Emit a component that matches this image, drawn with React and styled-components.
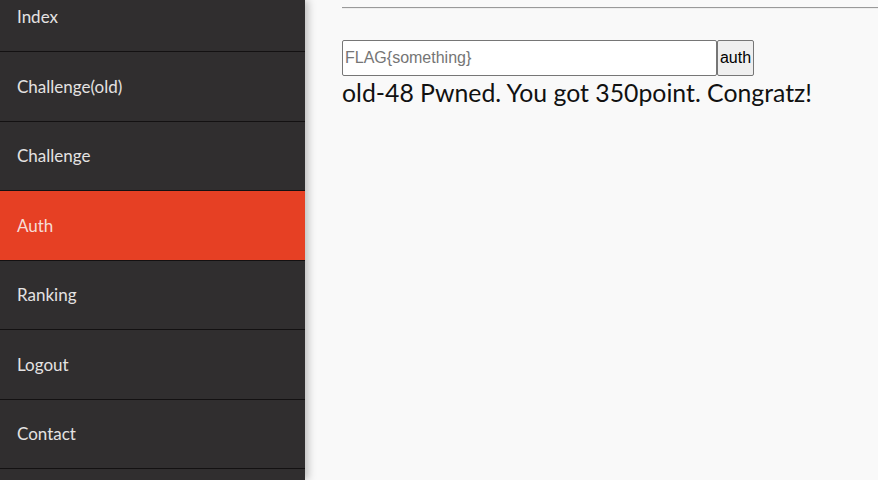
import React from "react";
import styled, { createGlobalStyle } from "styled-components";

const GlobalStyle = createGlobalStyle`
  html, body {
    margin: 0;
    padding: 0;
    height: 100%;
    overflow: hidden;
    background: #f9f9f9;
  }
  #root {
    height: 100%;
  }
`;

const Page = styled.div`
  display: flex;
  height: 480px;
  font-family: Lato, "Open Sans", sans-serif;
`;

const Sidebar = styled.nav`
  width: 305px;
  flex-shrink: 0;
  background: #302e2f;
  box-shadow: 3px 0 8px rgba(0, 0, 0, 0.25);
  overflow: hidden;
  position: relative;
  z-index: 1;
`;

const Menu = styled.ul`
  list-style: none;
  margin: -17.5px 0 0;
  padding: 0;
`;

const MenuItem = styled.li`
  height: 68.5px;
  display: flex;
  align-items: center;
  padding-left: 17px;
  border-bottom: 1px solid #131112;
  background: ${(p) => (p.$active ? "#e64024" : "transparent")};
  color: ${(p) => (p.$active ? "#f6ddd6" : "#e4e2e2")};
  font-size: 17px;
`;

const Main = styled.main`
  flex: 1;
  padding: 0 0 0 37px;
  background: #f9f9f9;
`;

const Rule = styled.hr`
  margin: 7px 0 0;
  border: none;
  border-top: 1px solid #9a9a9a;
  border-bottom: 1px solid #eeeeee;
  height: 0;
`;

const AuthForm = styled.form`
  display: flex;
  margin-top: 31px;
`;

const FlagInput = styled.input`
  width: 375px;
  height: 36px;
  box-sizing: border-box;
  border: 1px solid #767676;
  border-radius: 2px;
  padding: 0 2px;
  font-family: Arial, "Liberation Sans", sans-serif;
  font-size: 16px;
  color: #000;
  background: #fff;
  &::placeholder {
    color: #757575;
  }
`;

const AuthButton = styled.button`
  height: 36px;
  width: 37px;
  box-sizing: border-box;
  border: 1px solid #767676;
  border-radius: 2px;
  background: #efefef;
  font-family: Arial, "Liberation Sans", sans-serif;
  font-size: 16px;
  color: #000;
  padding: 0;
`;

const Message = styled.div`
  font-size: 24.8px;
  color: #111;
  margin-top: 1px;
  line-height: 31px;
`;

const items = ["Index", "Challenge(old)", "Challenge", "Auth", "Ranking", "Logout", "Contact", ""];

export default function App() {
  return (
    <>
      <GlobalStyle />
      <Page>
        <Sidebar>
          <Menu>
            {items.map((label, i) => (
              <MenuItem key={i} $active={label === "Auth"}>
                {label}
              </MenuItem>
            ))}
          </Menu>
        </Sidebar>
        <Main>
          <Rule />
          <AuthForm onSubmit={(e) => e.preventDefault()}>
            <FlagInput placeholder="FLAG{something}" />
            <AuthButton>auth</AuthButton>
          </AuthForm>
          <Message>old-48 Pwned. You got 350point. Congratz!</Message>
        </Main>
      </Page>
    </>
  );
}
